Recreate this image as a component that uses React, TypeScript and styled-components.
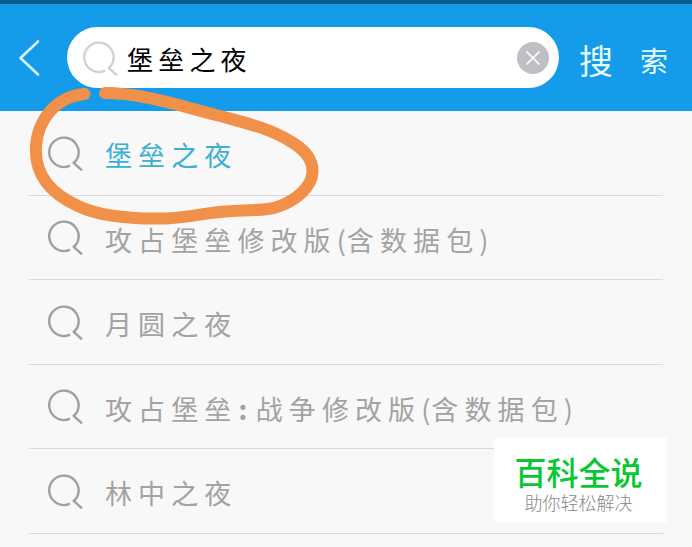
import React, { useState } from 'react';
import styled, { createGlobalStyle } from 'styled-components';

const SUGGESTIONS = ['堡垒之夜', '攻占堡垒修改版(含数据包)', '月圆之夜', '攻占堡垒:战争修改版(含数据包)', '林中之夜'];

const SearchIcon = () => (
  <svg width="36" height="36" viewBox="0 0 36 36" fill="none" stroke="currentColor" strokeWidth="2.4">
    <path d="M23 30.7A14.7 14.7 0 1 1 30.3 23.4Q29.2 25.8 26.7 27.8L35 35.4" strokeLinejoin="round" />
  </svg>
);

const renderTitle = (title: string) =>
  title.split(/([():])/).map((part, i) => {
    if (part === ':') return <Colon key={i}>{part}</Colon>;
    if (part === '(' || part === ')') return <Paren key={i}>{part}</Paren>;
    return part;
  });

const App = () => {
  const [query, setQuery] = useState('堡垒之夜');

  return (
    <Screen>
      <GlobalStyle />
      <Header>
        <BackButton type="button" aria-label="返回">
          <svg width="22" height="38" viewBox="0 0 22 38" fill="none" stroke="#d8f5ff" strokeWidth="2.6">
            <path d="M20 2.5L2.5 19L20 35.5" strokeLinecap="round" strokeLinejoin="round" />
          </svg>
        </BackButton>
        <SearchBox>
          <SearchIcon />
          <Input value={query} onChange={(e) => setQuery(e.target.value)} />
          <ClearButton type="button" aria-label="清除" onClick={() => setQuery('')}>
            <svg width="16" height="16" viewBox="0 0 16 16" stroke="#ffffff" strokeWidth="1.7">
              <path d="M2 2L14 14M14 2L2 14" strokeLinecap="round" />
            </svg>
          </ClearButton>
        </SearchBox>
        <SearchButton type="button">
          <span>搜</span>
          <span>索</span>
        </SearchButton>
      </Header>

      <List>
        {SUGGESTIONS.map((title, i) => (
          <Row key={title}>
            <SearchIcon />
            <Title $active={i === 0}>{renderTitle(title)}</Title>
          </Row>
        ))}
      </List>

      <Marker width="300" height="150" viewBox="22 80 300 150" fill="none" stroke="#f19149" strokeWidth="12">
        <path
          d="M84.5 94C58 96 38 118 36 146C34 178 54 195 78 206C105 219 143 219 166 218.500C188 218 207 212 232 211C253 209.500 268 211 280 206C296 200 312 187 312.500 172C313 159 304 149 290 141C270 129 250 124 224 117C190 109 145 93 105 93"
          strokeLinecap="round"
          strokeLinejoin="round"
        />
      </Marker>

      <Badge>
        <BadgeName>百科全说</BadgeName>
        <BadgeSlogan>助你轻松解决</BadgeSlogan>
      </Badge>
    </Screen>
  );
};

const GlobalStyle = createGlobalStyle`
  body {
    margin: 0;
    background-color: #f8f8f8;
    font-family: 'Noto Sans CJK SC', sans-serif;
  }

  * {
    box-sizing: border-box;
  }
`;

const Screen = styled.div`
  position: relative;
  width: 692px;
  height: 547px;
  overflow: hidden;
  background-color: #f8f8f8;
`;

const Header = styled.header`
  display: flex;
  align-items: center;
  height: 111px;
  padding: 0 24px 0 18px;
  background-color: #149bea;
  border-top: 4px solid #06608f;
`;

const BackButton = styled.button`
  display: flex;
  width: 49px;
  padding: 0;
  border: 0;
  background: none;
`;

const SearchBox = styled.div`
  display: flex;
  align-items: center;
  width: 492px;
  height: 61px;
  padding: 0 10px 0 15px;
  border-radius: 31px;
  background-color: #ffffff;
  color: #d2d2d2;

  > svg {
    flex-shrink: 0;
  }
`;

const Input = styled.input`
  flex: 1;
  min-width: 0;
  height: 44px;
  margin-left: 9px;
  padding: 2px 0 0;
  border: 0;
  outline: 0;
  color: #000000;
  font-family: 'Noto Sans CJK SC', sans-serif;
  font-size: 26px;
  letter-spacing: 5.2px;
`;

const ClearButton = styled.button`
  display: flex;
  align-items: center;
  justify-content: center;
  width: 32px;
  height: 32px;
  padding: 0;
  border: 0;
  border-radius: 50%;
  background-color: #bfc0c4;
`;

const SearchButton = styled.button`
  display: flex;
  flex: 1;
  justify-content: space-between;
  margin-left: 20px;
  padding: 5px 0 0;
  border: 0;
  background: none;
  color: #e6faff;
  font-family: 'Noto Sans CJK SC', sans-serif;
  font-size: 34px;
  line-height: 40px;

  span:last-child {
    font-size: 28px;
  }
`;

const List = styled.ul`
  margin: 0 29px;
  padding: 0;
  list-style: none;
`;

const Row = styled.li`
  display: flex;
  align-items: center;
  height: 84.5px;
  padding-left: 18px;
  border-bottom: 1px solid #dadada;
  color: #a0a0a0;
`;

const Title = styled.span<{ $active: boolean }>`
  margin: 5px 0 0 22px;
  font-size: 27px;
  font-weight: 400;
  line-height: 40px;
  letter-spacing: 6.1px;
  white-space: nowrap;
  color: ${({ $active }) => ($active ? '#3bb0d2' : '#a3a3a3')};
`;

const Paren = styled.span`
  letter-spacing: 1px;
`;

const Colon = styled.span`
  margin-left: 1px;
  letter-spacing: 8.5px;
  font-weight: 700;
`;

const Marker = styled.svg`
  position: absolute;
  top: 80px;
  left: 22px;
  pointer-events: none;
`;

const Badge = styled.div`
  position: absolute;
  top: 438px;
  left: 494px;
  display: flex;
  flex-direction: column;
  align-items: center;
  width: 173px;
  height: 84px;
  padding: 13px 4px 0 0;
  background-color: #ffffff;
`;

const BadgeName = styled.strong`
  color: #08c832;
  font-size: 32px;
  font-weight: 500;
  line-height: 40px;
`;

const BadgeSlogan = styled.span`
  margin-top: 1px;
  color: #888888;
  font-size: 18px;
  font-weight: 300;
  line-height: 20px;
`;

export default App;
